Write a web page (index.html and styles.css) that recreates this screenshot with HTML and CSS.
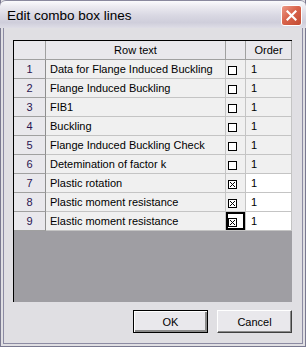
FILE: index.html
```html
<!DOCTYPE html>
<html>
<head lang="en">
    <meta charset="UTF-8">
    <title>Edit combo box lines</title>
    <link rel="stylesheet" href="styles.css">
</head>
<body>
<!-- dialog window -->
<div class="window">
    <div class="titlebar">
        <span class="title">Edit combo box lines</span>
        <span class="close-btn">
            <svg width="11" height="11" viewBox="0 0 11 11"><path d="M1.5 1.5 L9.5 9.5 M9.5 1.5 L1.5 9.5" stroke="#fff" stroke-width="2.2" stroke-linecap="square"/></svg>
        </span>
    </div>
    <div class="client">
        <div class="grid-box"><!-- grid -->
            <table class="grid">
                <colgroup>
                    <col class="c-num">
                    <col class="c-text">
                    <col class="c-check">
                    <col class="c-order">
                </colgroup>
                <tr class="head">
                    <th class="num"></th>
                    <th>Row text</th>
                    <th></th>
                    <th>Order</th>
                </tr>
                <tr><td class="num">1</td><td class="txt">Data for Flange Induced Buckling</td><td class="chk"><span class="box"></span></td><td class="ord">1</td></tr>
                <tr><td class="num">2</td><td class="txt">Flange Induced Buckling</td><td class="chk"><span class="box"></span></td><td class="ord">1</td></tr>
                <tr><td class="num">3</td><td class="txt">FIB1</td><td class="chk"><span class="box"></span></td><td class="ord">1</td></tr>
                <tr><td class="num">4</td><td class="txt">Buckling</td><td class="chk"><span class="box"></span></td><td class="ord">1</td></tr>
                <tr><td class="num">5</td><td class="txt">Flange Induced Buckling Check</td><td class="chk"><span class="box"></span></td><td class="ord">1</td></tr>
                <tr><td class="num">6</td><td class="txt">Detemination of factor k</td><td class="chk"><span class="box"></span></td><td class="ord">1</td></tr>
                <tr class="edit"><td class="num">7</td><td class="txt">Plastic rotation</td><td class="chk"><span class="box"><svg width="7" height="7" viewBox="0 0 7 7"><path d="M1 1 L6 6 M6 1 L1 6" stroke="#000" stroke-width="1"/></svg></span></td><td class="ord">1</td></tr>
                <tr class="edit"><td class="num">8</td><td class="txt">Plastic moment resistance</td><td class="chk"><span class="box"><svg width="7" height="7" viewBox="0 0 7 7"><path d="M1 1 L6 6 M6 1 L1 6" stroke="#000" stroke-width="1"/></svg></span></td><td class="ord">1</td></tr>
                <tr class="edit"><td class="num">9</td><td class="txt">Elastic moment resistance</td><td class="chk focus"><span class="box"><svg width="7" height="7" viewBox="0 0 7 7"><path d="M1 1 L6 6 M6 1 L1 6" stroke="#000" stroke-width="1"/></svg></span></td><td class="ord">1</td></tr>
            </table>
        </div>
        <div class="buttons">
            <button class="btn default">OK</button>
            <button class="btn">Cancel</button>
        </div>
    </div>
</div>
</body>
</html>
```

FILE: styles.css
```css
html, body{
    margin: 0;
    padding: 0;
}
body{
    width: 306px;
    height: 347px;
    font-family: "Liberation Sans", Arial, sans-serif;
    font-size: 11px;
    color: #000;
}
.window{
    width: 306px;
    height: 347px;
    box-sizing: border-box;
    background: #e0dfe3;
    border: 1px solid #7a7990;
    border-top: 0;
    display: flex;
    flex-direction: column;
}
.titlebar{
    height: 28px;
    margin: 0 -1px;
    box-sizing: border-box;
    border-top: 1px solid #8a899e;
    border-radius: 6px 6px 0 0;
    background: linear-gradient(#fbfbfd 0%, #ecebf1 20%, #d8d7e2 55%, #cfcedb 80%, #dedde6 100%);
    display: flex;
    align-items: center;
    padding: 0 4px 0 7px;
}
.title{
    flex: 1;
    font-size: 13.5px;
    padding-top: 2px;
}
.close-btn{
    width: 21px;
    height: 21px;
    box-sizing: border-box;
    border: 1px solid #fff;
    border-radius: 3px;
    background: linear-gradient(135deg, #ec9a88 0%, #d9644c 45%, #c24a32 100%);
    display: flex;
    align-items: center;
    justify-content: center;
    margin-top: 2px;
}
.client{
    flex: 1;
    margin: 0 2px 2px;
    border: 1px solid #8c8ba3;
    border-top: 0;
    padding: 12px 9px 0 9px;
}
.grid-box{
    width: 278px;
    height: 261px;
    border-left: 1px solid #000;
    border-top: 1px solid #000;
    background: #9f9ea3;
}
.grid{
    border-collapse: separate;
    border-spacing: 0;
    table-layout: fixed;
    width: 278px;
}
.c-num{ width: 32px; }
.c-text{ width: 180px; }
.c-check{ width: 20px; }
.c-order{ width: 46px; }
.grid th,
.grid td{
    height: 18px;
    padding: 0;
    line-height: 18px;
    border-right: 1px solid #c4c4c4;
    border-bottom: 1px solid #c4c4c4;
    font-weight: normal;
    white-space: nowrap;
    overflow: hidden;
    background: #f0f0f0;
}
.grid th{
    background: #e9e8ec;
    text-align: center;
    border-right-color: #a0a0a0;
    border-bottom-color: #a0a0a0;
}
.grid td.num{
    background: #e9e8ec;
    text-align: center;
    color: #2a1450;
    border-right-color: #8e8e8e;
    border-bottom-color: #a0a0a0;
}
.grid td.txt{
    padding-left: 4px;
}
.grid td.ord{
    padding-left: 5px;
}
.grid tr.edit td.ord{
    background: #fff;
}
.grid td.chk{
    height: 12px;
    line-height: 0;
    padding: 6px 0 0 2px;
    vertical-align: top;
}
.grid td.focus{
    background: #fff;
    box-shadow: inset 0 0 0 2px #000;
}
.box{
    display: block;
    width: 9px;
    height: 9px;
    box-sizing: border-box;
    border: 1px solid #000;
    background: #fff;
}
.box svg{
    display: block;
}
.buttons{
    display: flex;
    justify-content: flex-end;
    gap: 9px;
    margin-top: 8px;
    width: 279px;
}
.btn{
    width: 75px;
    height: 23px;
    box-sizing: border-box;
    font-family: "Liberation Sans", Arial, sans-serif;
    font-size: 11px;
    color: #000;
    background: #e9e8ec;
    border: 1px solid;
    border-color: #fff #404040 #404040 #fff;
    box-shadow: inset -1px -1px 0 #8a8a8a;
    padding: 0;
}
.btn.default{
    border: 1px solid #000;
    box-shadow: inset 1px 1px 0 #fff, inset -2px -2px 0 #8a8a8a;
}
```
